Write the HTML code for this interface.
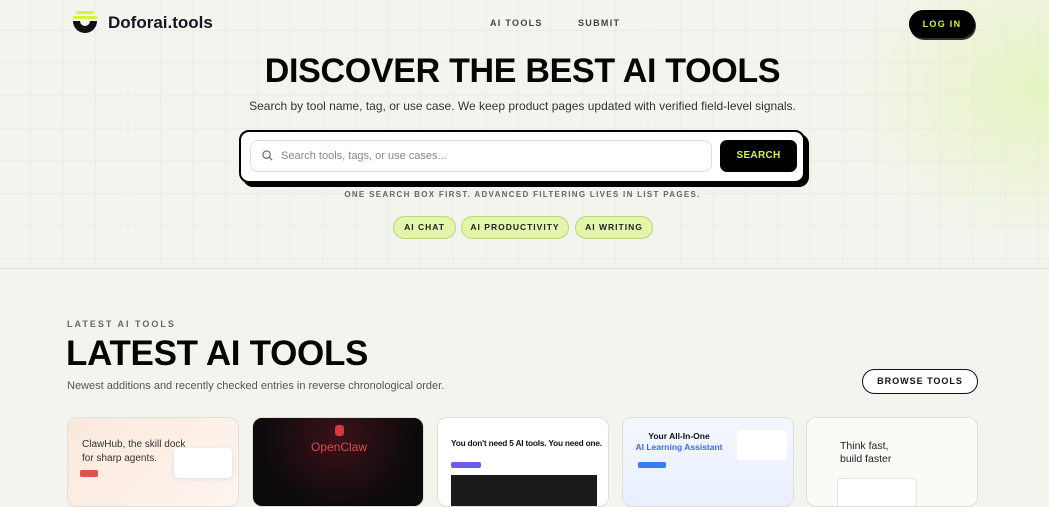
<!DOCTYPE html>
<html><head><meta charset="utf-8"><style>
*{margin:0;padding:0;box-sizing:border-box}
body{width:1049px;height:500px;overflow:hidden;background:#f4f4ef;font-family:"Liberation Sans",sans-serif;color:#111;position:relative}
.hero{position:absolute;left:0;top:0;width:1049px;height:269px;border-bottom:1px solid #e2e2dc;
background:
radial-gradient(ellipse 200px 160px at 1040px 90px,rgba(225,245,180,.75),rgba(225,245,180,0)),
linear-gradient(#ecece6 1px,transparent 1px) 0 30px/32px 32.6px,
linear-gradient(90deg,#ecece6 1px,transparent 1px) 30px 0/32.5px 32px,#f4f4ef}
.abs{position:absolute}
.logo{left:73px;top:10px;width:24px;height:24px}
.brand{left:108px;top:13px;font-size:17px;font-weight:bold;color:#15151f}
.nav{top:18px;font-size:9px;font-weight:bold;letter-spacing:1.3px;color:#444}
.login{left:909px;top:10px;width:66px;height:28px;background:#000;border-radius:14px;color:#d4f53c;font-size:9px;font-weight:bold;letter-spacing:1.3px;text-align:center;line-height:28px;box-shadow:1px 2px 0 #333}
h1{position:absolute;left:0;width:1045px;text-align:center;top:52px;font-size:34px;font-weight:900;letter-spacing:-.3px;color:#050505}
.sub{left:0;width:1045px;text-align:center;top:99px;font-size:12px;color:#333}
.sbox{left:239px;top:130px;width:566px;height:53px;background:#fff;border:2px solid #000;border-radius:10px;box-shadow:4px 4px 0 #000}
.inp{position:absolute;left:9px;top:8px;width:462px;height:32px;border:1px solid #ddd;border-radius:8px;font-size:11px;color:#888;line-height:30px;padding-left:30px}
.inp svg{position:absolute;left:11px;top:9px}
.sbtn{position:absolute;left:479px;top:8px;width:77px;height:32px;background:#000;border-radius:7px;color:#d4f53c;font-size:10px;font-weight:bold;text-align:center;line-height:32px;letter-spacing:.3px}
.note{left:0;width:1045px;text-align:center;top:190px;font-size:8px;letter-spacing:1.3px;color:#666;font-weight:bold}
.chip{top:216px;height:23px;border:1.5px solid #b9d67e;background:#e3f5a8;border-radius:12px;font-size:8.5px;font-weight:bold;letter-spacing:1px;line-height:20px;text-align:center;color:#222}
.eyebrow{left:67px;top:319px;font-size:9px;letter-spacing:2px;color:#666;font-weight:bold}
h2{position:absolute;left:66px;top:334px;font-size:35px;font-weight:900;letter-spacing:-.3px;color:#050505}
.desc{left:67px;top:380px;font-size:11px;color:#555}
.browse{left:862px;top:369px;width:116px;height:25px;border:1.5px solid #111;border-radius:13px;font-size:9px;font-weight:bold;letter-spacing:1px;text-align:center;line-height:22px;background:#fff}
.card{top:417px;width:172px;height:90px;border-radius:10px;border:1px solid #e0e0da;overflow:hidden}
</style></head><body>
<div class="hero"></div>
<svg class="abs logo" viewBox="0 0 24 24"><rect x="3" y="1" width="18" height="3" rx="1.5" fill="#d4f53c"/><rect x="0" y="6" width="24" height="3" rx="1.5" fill="#d4f53c"/><path d="M0 11h7a5 5 0 0 0 10 0h7a12 12 0 0 1-24 0z" fill="#111"/></svg>
<div class="abs brand">Doforai.tools</div>
<div class="abs nav" style="left:490px">AI TOOLS</div>
<div class="abs nav" style="left:578px">SUBMIT</div>
<div class="abs login">LOG IN</div>
<h1>DISCOVER THE BEST AI TOOLS</h1>
<div class="abs sub">Search by tool name, tag, or use case. We keep product pages updated with verified field-level signals.</div>
<div class="abs sbox"><div class="inp"><svg width="11" height="11" viewBox="0 0 12 12" fill="none" stroke="#666" stroke-width="1.3"><circle cx="5" cy="5" r="4"/><path d="M8 8l3 3"/></svg>Search tools, tags, or use cases...</div><div class="sbtn">SEARCH</div></div>
<div class="abs note">ONE SEARCH BOX FIRST. ADVANCED FILTERING LIVES IN LIST PAGES.</div>
<div class="abs chip" style="left:393px;width:63px">AI CHAT</div>
<div class="abs chip" style="left:461px;width:108px">AI PRODUCTIVITY</div>
<div class="abs chip" style="left:575px;width:78px">AI WRITING</div>
<div class="abs eyebrow">LATEST AI TOOLS</div>
<h2>LATEST AI TOOLS</h2>
<div class="abs desc">Newest additions and recently checked entries in reverse chronological order.</div>
<div class="abs browse">BROWSE TOOLS</div>
<div class="abs card" style="left:67px;background:linear-gradient(135deg,#fbe8dc,#fdf5ef)"><div style="position:absolute;left:14px;top:20px;font-size:10px;line-height:14px;color:#333">ClawHub, the skill dock<br>for sharp agents.</div><div style="position:absolute;left:106px;top:30px;width:58px;height:30px;background:#fff;border-radius:4px;box-shadow:0 1px 4px #ddd"></div><div style="position:absolute;left:12px;top:52px;width:18px;height:7px;background:#d9544a;border-radius:2px"></div></div>
<div class="abs card" style="left:252px;background:radial-gradient(circle at 50% 20%,#3a1218,#0c0a0c 70%)"><div style="position:absolute;left:0;width:172px;text-align:center;top:22px;font-size:12px;color:#e04850">OpenClaw</div><div style="position:absolute;left:82px;top:7px;width:9px;height:11px;background:#d63a40;border-radius:3px"></div></div>
<div class="abs card" style="left:437px;background:#fff"><div style="position:absolute;left:13px;top:20px;font-size:8.3px;font-weight:bold;white-space:nowrap;letter-spacing:-.2px">You don't need 5 AI tools. You need one.</div><div style="position:absolute;left:13px;top:44px;width:30px;height:6px;background:#6b5cf0;border-radius:2px"></div><div style="position:absolute;left:13px;top:57px;width:146px;height:40px;background:#1a1a1a"></div></div>
<div class="abs card" style="left:622px;background:linear-gradient(#f4f7ff,#e9efff)"><div style="position:absolute;left:0;width:112px;text-align:center;top:13px;font-size:8.5px;line-height:11px;font-weight:bold">Your All-In-One<br><span style="color:#3a6cf0">AI Learning Assistant</span></div><div style="position:absolute;left:15px;top:44px;width:28px;height:6px;background:#3a7cf0;border-radius:2px"></div><div style="position:absolute;left:114px;top:12px;width:50px;height:30px;background:#fff;border-radius:3px"></div></div>
<div class="abs card" style="left:806px;background:#fafaf7"><div style="position:absolute;left:33px;top:22px;font-size:10.5px;line-height:13px;color:#222">Think fast,<br>build faster</div><div style="position:absolute;left:30px;top:60px;width:80px;height:40px;background:#fff;border:1px solid #e5e5e5;border-radius:4px"></div></div>
</body></html>
